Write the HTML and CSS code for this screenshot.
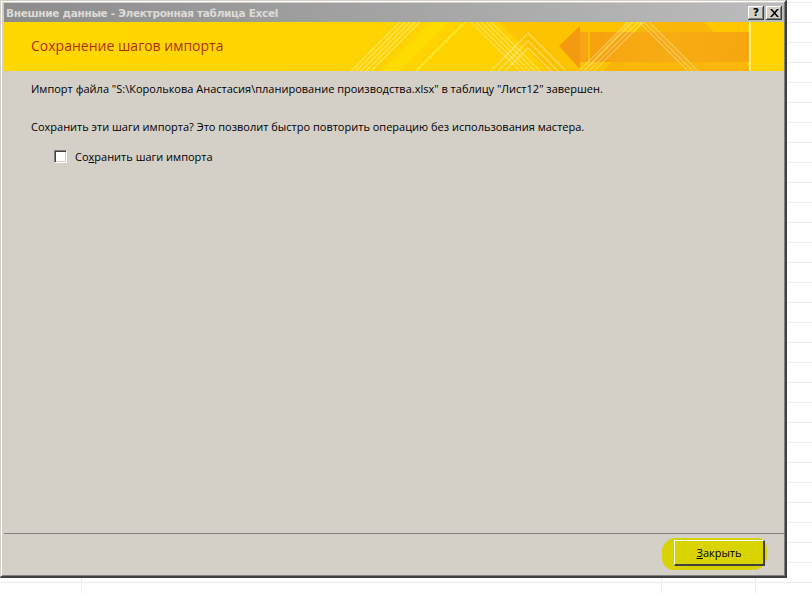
FILE: index.html
```html
<!DOCTYPE html>
<html lang="ru">
<head>
<meta charset="utf-8">
<title>Внешние данные - Электронная таблица Excel</title>
<link rel="stylesheet" href="styles.css">
</head>
<body>
<div class="window">
  <div class="titlebar">
    <span class="title">Внешние данные - Электронная таблица Excel</span>
    <div class="caption-buttons">
      <button class="cap-btn help" type="button">?</button>
      <button class="cap-btn close" type="button">
        <svg width="9" height="8" viewBox="0 0 9 8"><path d="M0 0h2l2.5 2.7L7 0h2L5.5 4 9 8H7L4.5 5.3 2 8H0l3.5-4z" fill="#000"/></svg>
      </button>
    </div>
  </div>
  <div class="banner">
    <h1 class="banner-title">Сохранение шагов импорта</h1>
    <svg class="banner-art" width="783" height="49" viewBox="0 0 783 49">
      <defs>
        <linearGradient id="bg" x1="0" y1="0" x2="1" y2="0">
          <stop offset="0" stop-color="#ffd800"/>
          <stop offset="0.6" stop-color="#ffd200"/>
          <stop offset="1" stop-color="#ffc400"/>
        </linearGradient>
        <linearGradient id="arrow" x1="0" y1="0" x2="1" y2="0">
          <stop offset="0" stop-color="#f59a10"/>
          <stop offset="0.5" stop-color="#f8ae18"/>
          <stop offset="1" stop-color="#f5a010"/>
        </linearGradient>
      </defs>
      <rect width="783" height="49" fill="url(#bg)"/>
      <g stroke="#fff" stroke-opacity="0.35" stroke-width="1.3">
        <line x1="347" y1="49" x2="396" y2="0"/>
        <line x1="352" y1="49" x2="401" y2="0"/>
        <line x1="357" y1="49" x2="406" y2="0"/>
        <line x1="362" y1="49" x2="411" y2="0"/>
        <line x1="367" y1="49" x2="416" y2="0"/>
      </g>
      <polygon points="378,49 427,0 445,0 396,49" fill="#ffe000" fill-opacity="0.7"/>
      <line x1="412" y1="49" x2="461" y2="0" stroke="#ffe830" stroke-width="2"/>
      <g stroke="#fff" stroke-opacity="0.3" stroke-width="1.3">
        <line x1="467" y1="0" x2="516" y2="49"/>
        <line x1="472" y1="0" x2="521" y2="49"/>
        <line x1="477" y1="0" x2="526" y2="49"/>
        <line x1="482" y1="0" x2="531" y2="49"/>
        <line x1="487" y1="0" x2="536" y2="49"/>
      </g>
      <polygon points="495,0 620,0 620,49 544,49" fill="#fbb800" fill-opacity="0.5"/>
      <g stroke="#fff" stroke-opacity="0.35" stroke-width="1.3" fill="none">
        <polyline points="487,49 524,11 562,49"/>
        <polyline points="494,49 524,19 554,49"/>
        <polyline points="501,49 524,26 547,49"/>
      </g>
      <polygon points="555,24 576,4 576,47" fill="#f39a12"/>
      <rect x="576" y="10" width="8" height="30" fill="#f7a514"/>
      <rect x="586" y="10" width="160" height="30" fill="url(#arrow)" fill-opacity="0.85"/>
      <polygon points="640,0 700,0 746,46 746,49 600,49" fill="#f6a812" fill-opacity="0.55"/>
      <g stroke="#fff" stroke-opacity="0.3" stroke-width="1.3">
        <line x1="635" y1="0" x2="684" y2="49"/>
        <line x1="640" y1="0" x2="689" y2="49"/>
        <line x1="645" y1="0" x2="694" y2="49"/>
        <line x1="575" y1="49" x2="624" y2="0"/>
        <line x1="580" y1="49" x2="629" y2="0"/>
        <line x1="585" y1="49" x2="634" y2="0"/>
        <line x1="590" y1="49" x2="639" y2="0"/>
      </g>
      <line x1="627" y1="0" x2="580" y2="49" stroke="#ffd84a" stroke-width="2" stroke-opacity="0.6"/>
      <rect x="746" y="0" width="37" height="49" fill="#ffd400"/>
      <rect x="745" y="0" width="1.5" height="49" fill="#fff" fill-opacity="0.9"/>
    </svg>
  </div>
  <div class="content">
    <p class="line">Импорт файла "S:\Королькова Анастасия\планирование производства.xlsx" в таблицу "Лист12" завершен.</p>
    <p class="line second">Сохранить эти шаги импорта? Это позволит быстро повторить операцию без использования мастера.</p>
    <label class="check">
      <span class="box"></span>
      <span>Со<u>х</u>ранить шаги импорта</span>
    </label>
  </div>
  <div class="footer">
    <div class="marker">
      <button class="btn" type="button"><u>З</u>акрыть</button>
    </div>
  </div>
</div>
</body>
</html>
```
FILE: styles.css
```css
html, body {
  margin: 0;
  padding: 0;
}
body {
  width: 812px;
  height: 593px;
  overflow: hidden;
  background-color: #fff;
  background-image:
    repeating-linear-gradient(to bottom, transparent 0, transparent 2px, #ececec 2px, #ececec 3px, transparent 3px, transparent 20px),
    linear-gradient(to right, transparent 81px, #ececec 81px, #ececec 82px, transparent 82px, transparent 661px, #ececec 661px, #ececec 662px, transparent 662px, transparent 755px, #ececec 755px, #ececec 756px, transparent 756px);
  font-family: "Open Sans", "Noto Sans", sans-serif;
}
.window {
  width: 781px;
  height: 572px;
  background: #d4d0c8;
  border-top: 1px solid #d4d0c8;
  border-left: 1px solid #d4d0c8;
  border-right: 2px solid #404040;
  border-bottom: 2px solid #404040;
  box-shadow: inset 1px 1px 0 #fff, inset -1px -1px 0 #808080;
  padding: 2px 1px 1px 2px;
  display: flex;
  flex-direction: column;
}
.titlebar {
  height: 19px;
  margin-left: 1px;
  background: linear-gradient(to right, #8c8c8c, #bcbcbc);
  display: flex;
  align-items: center;
  justify-content: space-between;
  padding: 0 2px 0 2px;
}
.title {
  font-family: "DejaVu Sans", sans-serif;
  font-weight: bold;
  font-size: 10.5px;
  color: #dedbd6;
  letter-spacing: -0.3px;
}
.caption-buttons {
  display: flex;
  gap: 2px;
}
.cap-btn {
  width: 16px;
  height: 14px;
  padding: 0;
  margin: 0;
  background: #d4d0c8;
  border: none;
  box-shadow: inset -1px -1px 0 #404040, inset 1px 1px 0 #fff, inset -2px -2px 0 #808080;
  display: flex;
  align-items: center;
  justify-content: center;
  font-family: "DejaVu Sans", sans-serif;
  font-weight: bold;
  font-size: 11px;
  line-height: 1;
  color: #000;
}
.banner {
  position: relative;
  height: 49px;
  margin-left: 1px;
  overflow: hidden;
}
.banner-art {
  position: absolute;
  left: 0;
  top: 0;
}
.banner-title {
  position: relative;
  z-index: 1;
  margin: 0;
  padding: 15px 0 0 27px;
  font-size: 14px;
  line-height: 18px;
  font-weight: normal;
  color: #b0300a;
}
.content {
  flex: 1;
  padding: 10px 0 0 28px;
  font-size: 11px;
  color: #000;
}
.line {
  margin: 0;
  line-height: 16px;
}
.second {
  margin-top: 22px;
}
.check {
  display: flex;
  align-items: center;
  gap: 8px;
  margin: 14px 0 0 23px;
}
.box {
  width: 11px;
  height: 11px;
  background: #fff;
  border-top: 1px solid #808080;
  border-left: 1px solid #808080;
  border-right: 1px solid #fff;
  border-bottom: 1px solid #fff;
  box-shadow: inset 1px 1px 0 #404040, inset -1px -1px 0 #d4d0c8;
}
.footer {
  height: 41px;
  border-top: 1px solid #808080;
  margin-left: 1px;
  display: flex;
  justify-content: flex-end;
  align-items: flex-start;
  padding-right: 17px;
}
.marker {
  margin-top: 4px;
  padding: 2px 2px 4px 12px;
  background: #d8d200;
  border-radius: 14px 10px 14px 12px;
}
.btn {
  width: 91px;
  height: 26px;
  padding: 0;
  background: #d9d300;
  border-top: 1px solid #fff;
  border-left: 1px solid #fff;
  border-right: 2px solid #404040;
  border-bottom: 2px solid #404040;
  font-family: "Open Sans", "Noto Sans", sans-serif;
  font-size: 11px;
  color: #000;
}
```
